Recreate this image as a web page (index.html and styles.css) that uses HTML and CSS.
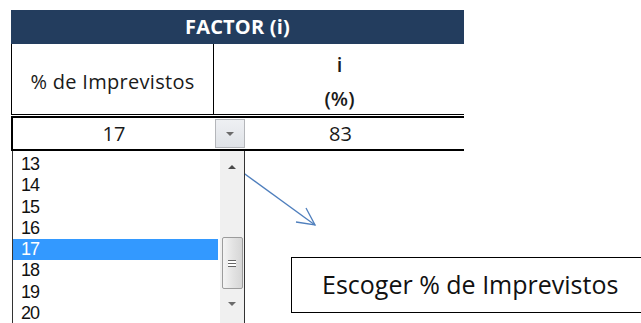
FILE: index.html
```html
<!DOCTYPE html>
<html lang="es">

<head>
    <meta charset="UTF-8">
    <meta name="viewport" content="width=device-width, initial-scale=1.0">
    <title>Factor (i)</title>
    <link rel="stylesheet" href="styles.css">
</head>

<body>
    <div class="sheet">
        <div class="factor">
            <div class="factor-head">FACTOR (i)</div>
            <div class="factor-labels">
                <div class="cell cell-left">% de Imprevistos</div>
                <div class="cell cell-right">
                    <span>i</span>
                    <span>(%)</span>
                </div>
            </div>
            <div class="factor-values">
                <div class="cell cell-left value-cell">
                    17
                    <span class="drop-btn"><span class="tri tri-down"></span></span>

                    <!-- open validation list -->
                    <div class="drop-list">
                        <ul class="options">
                            <li>13</li>
                            <li>14</li>
                            <li>15</li>
                            <li>16</li>
                            <li class="selected">17</li>
                            <li>18</li>
                            <li>19</li>
                            <li>20</li>
                        </ul>
                        <div class="scrollbar">
                            <span class="tri tri-up"></span>
                            <span class="thumb">
                                <span class="grip"></span>
                            </span>
                            <span class="tri tri-down"></span>
                        </div>
                    </div>
                </div>
                <div class="cell cell-right">83</div>
            </div>
        </div>

        <svg class="pointer" width="100" height="80" viewBox="0 0 100 80">
            <line x1="1" y1="1" x2="78" y2="57" stroke="#4f7fbd" stroke-width="1.3" />
            <polyline points="69,40 78,57 59,54" fill="none" stroke="#4f7fbd" stroke-width="1.3" />
        </svg>

        <div class="callout">Escoger % de Imprevistos</div>
    </div>
</body>

</html>
```

FILE: styles.css
```css
body {
    margin: 0;
    background: #fff;
    font-family: "Open Sans", Lato, sans-serif;
    color: #1a1a1a;
    overflow: hidden;
}

.sheet {
    position: relative;
    width: 641px;
    height: 323px;
    padding: 10px 0 0 11px;
    box-sizing: border-box;
}

.factor {
    width: 453px;
}

.factor-head {
    height: 34px;
    background: #233d5e;
    color: #fff;
    font-weight: bold;
    font-size: 20px;
    line-height: 34px;
    text-align: center;
    letter-spacing: 0.2px;
}

.factor-labels {
    display: grid;
    grid-template-columns: 202px 251px;
    height: 71px;
    border-left: 1px solid #000;
    border-bottom: 1px solid #000;
    box-sizing: border-box;
    font-size: 20px;
}

.cell {
    display: flex;
    align-items: center;
    justify-content: center;
}

.factor-labels .cell-left {
    border-right: 1px solid #000;
    padding-top: 5px;
    letter-spacing: 0.3px;
}

.factor-labels .cell-right {
    flex-direction: column;
    gap: 8px;
    padding-top: 5px;
    line-height: 26px;
    font-weight: 600;
}

.factor-values {
    display: grid;
    grid-template-columns: 202px 251px;
    height: 35px;
    margin-top: 1px;
    border: 2px solid #000;
    border-right: none;
    box-sizing: border-box;
    font-size: 20px;
}

.value-cell {
    position: relative;
}

.drop-btn {
    position: absolute;
    left: 202px;
    top: 1px;
    width: 28px;
    height: 27px;
    border: 1px solid #b4b6ba;
    background: linear-gradient(#eef0f3, #dfe2e7);
    display: flex;
    align-items: center;
    justify-content: center;
}

.tri {
    width: 0;
    height: 0;
    border-left: 4px solid transparent;
    border-right: 4px solid transparent;
}

.tri-down {
    border-top: 4px solid #6b6b6b;
}

.tri-up {
    border-bottom: 4px solid #4a4a4a;
}

.drop-list {
    position: absolute;
    left: -1px;
    top: 33px;
    width: 231px;
    height: 175px;
    border-left: 1px solid #333;
    border-right: 1px solid #333;
    background: #fff;
    display: flex;
    z-index: 2;
}

.options {
    list-style: none;
    margin: 0;
    padding: 3px 0 0;
    flex: 1;
    font-family: "Liberation Sans", Arial, sans-serif;
    font-size: 18px;
    letter-spacing: -1px;
    color: #111;
}

.options li {
    height: 21.3px;
    line-height: 21.3px;
    padding-left: 8px;
    margin-right: 2px;
}

.options .selected {
    background: #3399ff;
    color: #fff;
}

.scrollbar {
    width: 24px;
    background: #f0f0f0;
    display: flex;
    flex-direction: column;
    align-items: center;
    padding: 14px 0 0;
    box-sizing: border-box;
}

.thumb {
    margin-top: 68px;
    width: 21px;
    height: 52px;
    border: 1px solid #9c9c9c;
    border-radius: 2px;
    background: linear-gradient(to right, #f4f4f4, #e2e2e2 55%, #d6d6d6);
    display: flex;
    align-items: center;
    justify-content: center;
    box-sizing: border-box;
}

.grip {
    width: 8px;
    height: 7px;
    border-top: 1px solid #666;
    border-bottom: 1px solid #666;
    background: linear-gradient(#fff 2px, #666 2px, #666 3px, #fff 3px);
    box-sizing: border-box;
}

.scrollbar .tri-down {
    margin-top: 13px;
}

.pointer {
    position: absolute;
    left: 237px;
    top: 168px;
}

.callout {
    position: absolute;
    left: 291px;
    top: 257px;
    width: 360px;
    height: 56px;
    border: 1.5px solid #000;
    box-sizing: border-box;
    padding-left: 30px;
    font-family: "Open Sans", Lato, sans-serif;
    font-size: 25px;
    line-height: 53px;
    color: #111;
}
```
